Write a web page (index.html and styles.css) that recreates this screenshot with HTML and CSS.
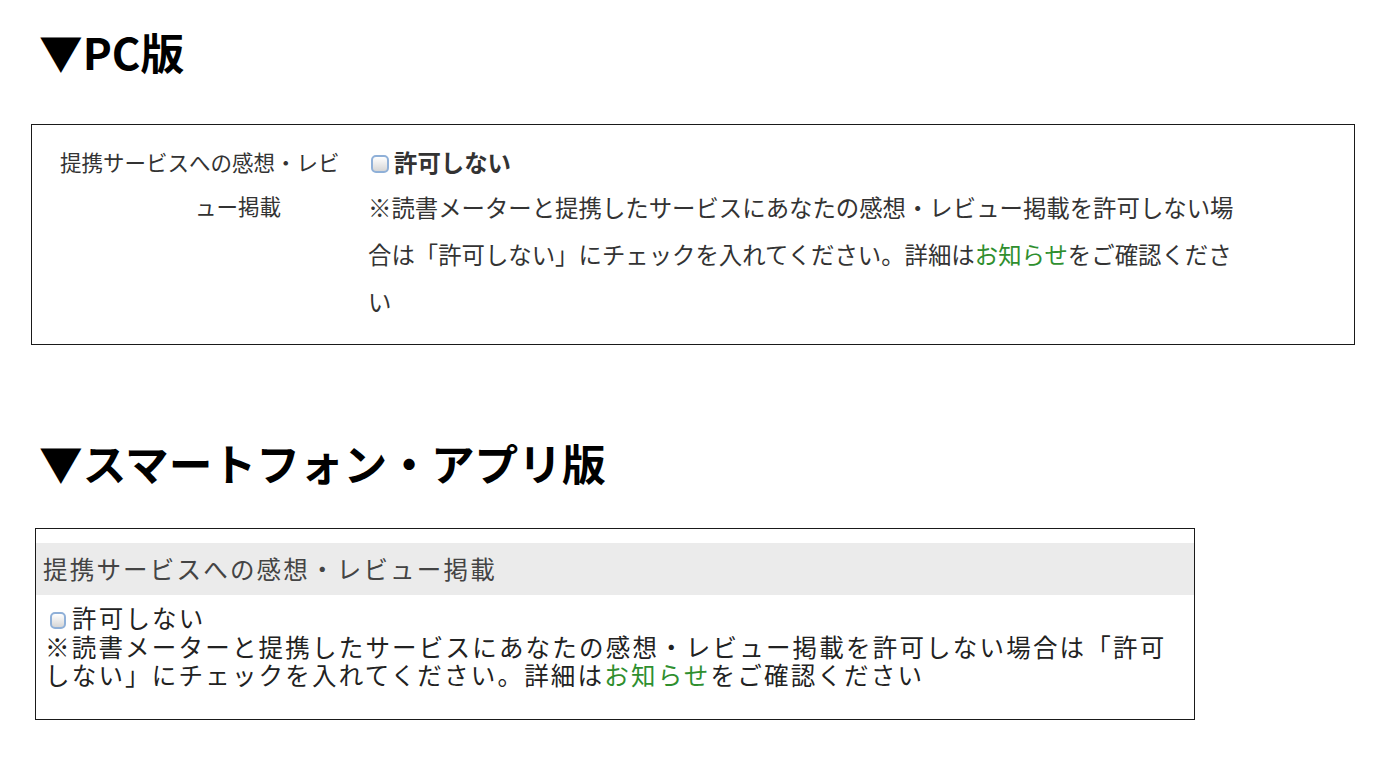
FILE: index.html
```html
<!DOCTYPE html>
<html lang="ja">
<head>
<meta charset="utf-8">
<title>提携サービスへの感想・レビュー掲載</title>
<link rel="stylesheet" href="styles.css">
</head>
<body>
<h2 class="heading heading-pc">▼PC版</h2>
<div class="pc-box">
  <div class="pc-label">
    <span class="l1">提携サービスへの感想・レビ</span>
    <span class="l2">ュー掲載</span>
  </div>
  <div class="pc-value">
    <div class="pc-check"><span class="checkbox"></span><span class="pc-check-text">許可しない</span></div>
    <p class="pc-desc">※読書メーターと提携したサービスにあなたの感想・レビュー掲載を許可しない場合は「許可しない」にチェックを入れてください。詳細は<a class="link" href="#">お知らせ</a>をご確認ください</p>
  </div>
</div>

<h2 class="heading heading-sp">▼スマートフォン・アプリ版</h2>
<div class="sp-box">
  <div class="sp-head">提携サービスへの感想・レビュー掲載</div>
  <div class="sp-body">
    <div class="sp-check"><span class="checkbox checkbox-sp"></span>許可しない</div>
    <div class="sp-desc">※読書メーターと提携したサービスにあなたの感想・レビュー掲載を許可しない場合は「許可しない」にチェックを入れてください。詳細は<a class="link" href="#">お知らせ</a>をご確認ください</div>
  </div>
</div>
</body>
</html>
```

FILE: styles.css
```css
html, body {
  margin: 0;
  padding: 0;
  background: #ffffff;
}
body {
  font-family: "Noto Sans CJK JP", sans-serif;
  color: #333333;
  width: 1400px;
}
.heading {
  margin: 0;
  font-size: 43.7px;
  font-weight: 700;
  line-height: 52px;
  color: #000000;
  padding-left: 39px;
}
.heading-pc {
  padding-top: 25px;
  margin-bottom: 47px;
}
.pc-box {
  margin-left: 31px;
  width: 1322px;
  border: 1px solid #1a1a1a;
  padding: 15px 0 19px 0;
  display: flex;
}
.pc-label {
  width: 280px;
  margin-left: 28px;
  font-size: 21.5px;
  line-height: 44px;
  color: #333333;
  flex-shrink: 0;
}
.pc-label .l1 {
  display: block;
  white-space: nowrap;
}
.pc-label .l2 {
  display: block;
  padding-left: 76px;
  text-align: center;
}
.pc-value {
  margin-left: 28px;
  width: 876px;
}
.pc-check {
  display: flex;
  align-items: center;
  height: 44px;
  font-size: 23.4px;
  font-weight: 700;
  color: #333333;
}
.checkbox {
  display: block;
  box-sizing: border-box;
  width: 18px;
  height: 18px;
  min-width: 18px;
  border: 2px solid #8fb0d8;
  border-radius: 5px;
  background: linear-gradient(#ffffff, #d6d6d6);
  margin: 4px 5px 0 3px;
  flex: 0 0 18px;
}
.pc-desc {
  margin: 0;
  font-size: 23.4px;
  line-height: 47px;
  color: #333333;
}
.link {
  color: #2f8f2f;
  text-decoration: none;
}
.heading-sp {
  margin-top: 91px;
  margin-bottom: 40px;
}
.sp-box {
  margin-left: 35px;
  width: 1158px;
  border: 1px solid #1a1a1a;
  padding: 14px 0 29px 0;
}
.sp-head {
  background: #ebebeb;
  height: 52px;
  line-height: 52px;
  padding-left: 7px;
  font-size: 24.5px;
  letter-spacing: 2.2px;
  color: #444444;
  white-space: nowrap;
}
.sp-body {
  padding: 9px 0 0 9px;
  font-size: 24.5px;
  letter-spacing: 2.2px;
  line-height: 28.5px;
  color: #222222;
}
.sp-check {
  display: flex;
  align-items: center;
}
.checkbox-sp {
  width: 16px;
  height: 17px;
  min-width: 16px;
  flex: 0 0 16px;
  margin: 4px 6px 0 5px;
}
.sp-desc {
  width: 1146px;
}
```
